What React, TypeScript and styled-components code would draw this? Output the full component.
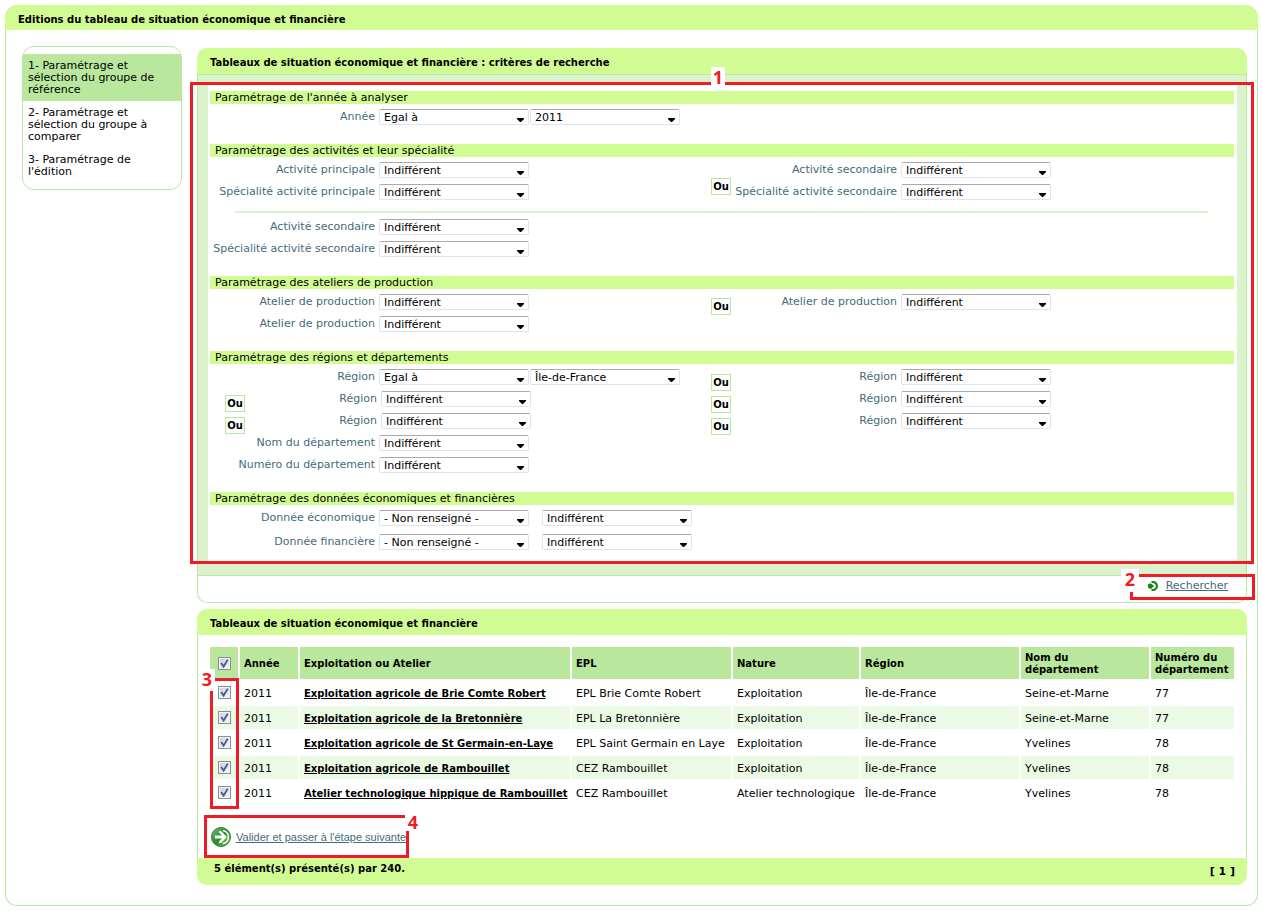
import React, { useId } from "react";
import styled, { createGlobalStyle } from "styled-components";

const lime = "#d1fc93";
const leaf = "#b9e79d";
const mist = "#daf3cc";
const stripe = "#eafae4";
const red = "#ee1c24";
const slate = "#446a7c";

const GlobalStyle = createGlobalStyle`
  *, *::before, *::after { box-sizing: border-box; }
  body {
    margin: 0;
    background: #fff;
    color: #000;
    font: 11px/12px "DejaVu Sans", Verdana, sans-serif;
  }
  h1, h2, h3 { margin: 0; }
`;

const Page = styled.div`
  margin: 5px 4px 5px 5px;
`;

const PageTitle = styled.h1`
  padding: 9px 13px 4px;
  background: ${lime};
  border-radius: 12px 12px 0 0;
  font-size: 10px;
`;

const PageBody = styled.div`
  display: flex;
  align-items: flex-start;
  gap: 15px;
  padding: 16px 10px 20px 16px;
  border: 1px solid ${leaf};
  border-top: 0;
  border-radius: 0 0 12px 12px;
`;

const Steps = styled.nav`
  flex: 0 0 160px;
  padding: 7px 0 6px;
  border: 1px solid ${leaf};
  border-radius: 12px;
`;

const Step = styled.a<{ $current?: boolean }>`
  display: block;
  padding: 6px 20px 5px 5px;
  color: #000;
  text-decoration: none;
  background: ${(p) => (p.$current ? leaf : "transparent")};
`;

const Main = styled.main`
  flex: 1;
  min-width: 0;
  display: flex;
  flex-direction: column;
  gap: 6px;
  padding-top: 2px;
`;

const PanelTitle = styled.h2`
  padding: 9px 13px 5px;
  background: ${lime};
  border-radius: 10px 10px 0 0;
  font-size: 10px;
`;

const FormFrame = styled.div`
  position: relative;
  padding: 8px 9px 14px 10px;
  background: ${mist};
  border: 1px solid ${leaf};
`;

const Sheet = styled.form`
  display: flex;
  flex-direction: column;
  gap: 19px;
  padding: 8px 3px 11px 2px;
  background: #fff;
`;

const FormFoot = styled.div`
  position: relative;
  display: flex;
  justify-content: flex-end;
  align-items: center;
  height: 27px;
  padding: 0 18px 6px;
  border: 1px solid ${leaf};
  border-top: 0;
  border-radius: 0 0 10px 10px;
`;

const SectionTitle = styled.h3`
  margin-bottom: 5px;
  padding: 1px 5px 0;
  font-size: 11px;
  font-weight: normal;
  background: ${lime};
`;

const Columns = styled.div`
  display: grid;
  grid-template-columns: 501fr 21px 502fr;
`;

const Stack = styled.div<{ $gap?: number; $top?: number }>`
  display: flex;
  flex-direction: column;
  gap: ${(p) => p.$gap ?? 6}px;
  padding-top: ${(p) => p.$top ?? 0}px;
`;

const Divider = styled.hr`
  height: 2px;
  margin: 11px 26px 6px 25px;
  border: 0;
  background: ${mist};
`;

const Row = styled.div<{ $shift?: boolean }>`
  display: flex;
  height: 16px;
  padding-left: ${(p) => (p.$shift ? 2 : 0)}px;
`;

const LabelCell = styled.div<{ $split?: boolean }>`
  flex: 0 0 169px;
  display: flex;
  justify-content: ${(p) => (p.$split ? "space-between" : "flex-end")};
  padding: 0 4px 0 ${(p) => (p.$split ? 13 : 0)}px;
`;

const Label = styled.label`
  padding-top: 2px;
  color: ${slate};
  white-space: nowrap;
`;

const Or = styled.b`
  width: 20px;
  height: 17px;
  border: 1px solid ${leaf};
  background: #fff;
  font-size: 10px;
  line-height: 16px;
  text-align: center;
`;

const RowOr = styled(Or)`
  margin-top: 4px;
`;

const SelectBox = styled.span<{ $before: number }>`
  display: grid;
  align-items: center;
  width: 150px;
  height: 16px;
  margin-left: ${(p) => p.$before}px;

  > * { grid-area: 1 / 1; }
  > svg {
    justify-self: end;
    margin: 6px 5px 0 0;
    pointer-events: none;
  }
`;

const Select = styled.select`
  appearance: none;
  width: 100%;
  height: 16px;
  padding: 1px 18px 0 4px;
  border: 1px solid #dfe3ec;
  border-top-color: #a9a9ae;
  border-radius: 2px;
  background: #fff;
  color: #000;
  font: 11px/13px "DejaVu Sans", Verdana, sans-serif;
`;

const TextLink = styled.a`
  display: inline-flex;
  align-items: center;
  gap: 8px;
  color: ${slate};
`;

const NextLink = styled(TextLink)`
  gap: 5px;
  font: 11px/14px "Liberation Sans", Arial, sans-serif;
`;

const ResultBody = styled.div`
  padding: 10px 10px 8px;
  border: solid ${leaf};
  border-width: 0 1px;
`;

const Results = styled.table`
  width: 100%;
  table-layout: fixed;
  border-spacing: 2px;

  th, td {
    height: 23px;
    padding: 0 4px;
    text-align: left;
    white-space: nowrap;
  }
  th {
    height: 32px;
    padding-top: 1px;
    background: ${leaf};
    font-size: 10px;
    white-space: normal;
  }
  td { padding-top: 2px; }
  th:first-child, td:first-child { padding: 0; text-align: center; }
  tbody tr:nth-child(even) td { background: ${stripe}; }
  td a { color: #000; font-size: 10px; font-weight: bold; }
`;

const CheckFrame = styled.span`
  display: inline-grid;
  vertical-align: middle;

  > * { grid-area: 1 / 1; }
  > svg { display: none; pointer-events: none; }
  > input:checked + svg { display: block; }
`;

const CheckInput = styled.input`
  appearance: none;
  width: 13px;
  height: 13px;
  margin: 0;
  border: 1px solid #8e8f8f;
  background: linear-gradient(135deg, #c9ced6, #f7f8f9);
  box-shadow: inset 0 0 0 1px #f4f4f4;
`;

const NextBar = styled.div`
  position: relative;
  display: inline-block;
  margin-top: 9px;
  padding: 12px 3px 0 3px;
`;

const ResultFoot = styled.div`
  display: flex;
  justify-content: space-between;
  padding: 5px 12px 7px 17px;
  background: ${lime};
  border-radius: 0 0 10px 10px;
  font-size: 10px;
  font-weight: bold;
`;

const PageCount = styled.span`
  padding-top: 3px;
  font-size: 11px;
`;

/* Red call-outs laid over the screen */
const Callout = styled.div`
  position: absolute;
  border: 3px solid ${red};
  pointer-events: none;
`;
const CalloutForm = styled(Callout)`
  inset: 7px -8px 11px -8px;
`;
const CalloutSearch = styled(Callout)`
  inset: -2px -9px 2px auto;
  width: 125px;
`;
const CalloutRows = styled(Callout)`
  inset: 33px auto -3px 2px;
  width: 29px;
`;
const CalloutNext = styled(Callout)`
  inset: 0 auto -8px -4px;
  width: 205px;
`;
const Mark = styled.b<{ $left: string; $top: number; $width?: number; $height?: number }>`
  position: absolute;
  left: ${(p) => p.$left};
  top: ${(p) => p.$top}px;
  width: ${(p) => p.$width ?? 16}px;
  height: ${(p) => p.$height ?? 20}px;
  background: #fff;
  color: ${red};
  font: bold 18px/20px "Open Sans", "Noto Sans", sans-serif;
  text-align: center;
`;

const TableWrap = styled.div`
  position: relative;
`;

type Field = { label: string; values: string[]; or?: boolean; gap?: number };

function Picker({ value, id, name, before = 0 }: { value: string; id?: string; name?: string; before?: number }) {
  return (
    <SelectBox $before={before}>
      <Select id={id} aria-label={name} defaultValue={value}>
        <option>{value}</option>
      </Select>
      <svg width="7" height="4" viewBox="0 0 7 4" aria-hidden="true">
        <path d="M0 0h7v1L4 4H3L0 1z" fill="#000" />
      </svg>
    </SelectBox>
  );
}

function FieldRow({ label, values, or, gap = 1 }: Field) {
  const id = useId();
  return (
    <Row $shift={or}>
      <LabelCell $split={or}>
        {or && <RowOr>Ou</RowOr>}
        <Label htmlFor={id}>{label}</Label>
      </LabelCell>
      {values.map((v, i) => (
        <Picker key={i} value={v} id={i ? undefined : id} name={i ? `${label} : valeur` : undefined} before={i ? gap : 0} />
      ))}
    </Row>
  );
}

function Fields({ items, gap }: { items: Field[]; gap?: number }) {
  return (
    <Stack $gap={gap}>
      {items.map((f, i) => (
        <FieldRow key={i} {...f} />
      ))}
    </Stack>
  );
}

function Pair({ left, right, ors, top }: { left: Field[]; right: Field[]; ors: number; top: number }) {
  return (
    <Columns>
      <Fields items={left} />
      <Stack $gap={5} $top={top}>
        {Array.from({ length: ors }, (_, i) => (
          <Or key={i}>Ou</Or>
        ))}
      </Stack>
      <Fields items={right} />
    </Columns>
  );
}

function Check({ name }: { name: string }) {
  return (
    <CheckFrame>
      <CheckInput type="checkbox" defaultChecked aria-label={name} />
      <svg width="13" height="13" viewBox="0 0 13 13" aria-hidden="true">
        <path d="M3.2 6 5.600 9.500 9.800 2.600" fill="none" stroke="#3c5a9f" strokeWidth="1.800" />
      </svg>
    </CheckFrame>
  );
}

const any = ["Indifférent"];
const columns = [28, 58, 270, 159, 126, 158, 128, 83];
const headings = ["Année", "Exploitation ou Atelier", "EPL", "Nature", "Région", "Nom du département", "Numéro du département"];
const rows = [
  ["2011", "Exploitation agricole de Brie Comte Robert", "EPL Brie Comte Robert", "Exploitation", "Île-de-France", "Seine-et-Marne", "77"],
  ["2011", "Exploitation agricole de la Bretonnière", "EPL La Bretonnière", "Exploitation", "Île-de-France", "Seine-et-Marne", "77"],
  ["2011", "Exploitation agricole de St Germain-en-Laye", "EPL Saint Germain en Laye", "Exploitation", "Île-de-France", "Yvelines", "78"],
  ["2011", "Exploitation agricole de Rambouillet", "CEZ Rambouillet", "Exploitation", "Île-de-France", "Yvelines", "78"],
  ["2011", "Atelier technologique hippique de Rambouillet", "CEZ Rambouillet", "Atelier technologique", "Île-de-France", "Yvelines", "78"],
];

export default function App() {
  return (
    <>
      <GlobalStyle />
      <Page>
        <PageTitle>Editions du tableau de situation économique et financière</PageTitle>
        <PageBody>
          <Steps>
            <Step href="#reference" $current>1- Paramétrage et sélection du groupe de référence</Step>
            <Step href="#comparer">2- Paramétrage et sélection du groupe à comparer</Step>
            <Step href="#edition">3- Paramétrage de l'édition</Step>
          </Steps>
          <Main>
            <section>
              <PanelTitle>Tableaux de situation économique et financière : critères de recherche</PanelTitle>
              <FormFrame>
                <Sheet>
                  <div>
                    <SectionTitle>Paramétrage de l'année à analyser</SectionTitle>
                    <Fields items={[{ label: "Année", values: ["Egal à", "2011"] }]} />
                  </div>
                  <div>
                    <SectionTitle>Paramétrage des activités et leur spécialité</SectionTitle>
                    <Pair
                      left={[{ label: "Activité principale", values: any }, { label: "Spécialité activité principale", values: any }]}
                      right={[{ label: "Activité secondaire", values: any }, { label: "Spécialité activité secondaire", values: any }]}
                      ors={1}
                      top={16}
                    />
                    <Divider />
                    <Fields items={[{ label: "Activité secondaire", values: any }, { label: "Spécialité activité secondaire", values: any }]} />
                  </div>
                  <div>
                    <SectionTitle>Paramétrage des ateliers de production</SectionTitle>
                    <Pair
                      left={[{ label: "Atelier de production", values: any }, { label: "Atelier de production", values: any }]}
                      right={[{ label: "Atelier de production", values: any }]}
                      ors={1}
                      top={4}
                    />
                  </div>
                  <div>
                    <SectionTitle>Paramétrage des régions et départements</SectionTitle>
                    <Pair
                      left={[
                        { label: "Région", values: ["Egal à", "Île-de-France"] },
                        { label: "Région", values: any, or: true },
                        { label: "Région", values: any, or: true },
                        { label: "Nom du département", values: any },
                        { label: "Numéro du département", values: any },
                      ]}
                      right={[
                        { label: "Région", values: any },
                        { label: "Région", values: any },
                        { label: "Région", values: any },
                      ]}
                      ors={3}
                      top={5}
                    />
                  </div>
                  <div>
                    <SectionTitle>Paramétrage des données économiques et financières</SectionTitle>
                    <Fields
                      gap={8}
                      items={[
                        { label: "Donnée économique", values: ["- Non renseigné -", "Indifférent"], gap: 13 },
                        { label: "Donnée financière", values: ["- Non renseigné -", "Indifférent"], gap: 13 },
                      ]}
                    />
                  </div>
                </Sheet>
                <CalloutForm />
                <Mark $left="calc(50% - 11px)" $top={-8} $width={14} $height={19}>1</Mark>
              </FormFrame>
              <FormFoot>
                <TextLink href="#rechercher">
                  <svg width="10" height="10" viewBox="0 0 10 10" aria-hidden="true">
                    <path d="M0 3.500 1.500 2.500 3 2.500 6 5 3 8 1.500 7.500 0 6.500z" fill="#0c8a10" />
                    <path d="M3.500 1H6Q9 2.500 9 5T6 9H3.500" fill="none" stroke="#128a16" strokeWidth="2" />
                  </svg>
                  Rechercher
                </TextLink>
                <CalloutSearch />
                <Mark $left="calc(100% - 125px)" $top={-7} $width={18} $height={23}>2</Mark>
              </FormFoot>
            </section>
            <section>
              <PanelTitle>Tableaux de situation économique et financière</PanelTitle>
              <ResultBody>
                <TableWrap>
                  <Results>
                    <colgroup>
                      {columns.map((w, i) => (
                        <col key={i} width={w} />
                      ))}
                    </colgroup>
                    <thead>
                      <tr>
                        <th scope="col"><Check name="Tout sélectionner" /></th>
                        {headings.map((h) => (
                          <th key={h} scope="col">{h}</th>
                        ))}
                      </tr>
                    </thead>
                    <tbody>
                      {rows.map((r) => (
                        <tr key={r[1]}>
                          <td><Check name={r[1]} /></td>
                          {r.map((c, i) => (
                            <td key={i}>{i === 1 ? <a href="#fiche">{c}</a> : c}</td>
                          ))}
                        </tr>
                      ))}
                    </tbody>
                  </Results>
                  <CalloutRows />
                  <Mark $left="-9px" $top={24} $height={22}>3</Mark>
                </TableWrap>
                <NextBar>
                  <NextLink href="#suite">
                    <svg width="20" height="20" viewBox="0 0 20 20" aria-hidden="true">
                      <defs>
                        <linearGradient id="ball" x1="0" y1="0" x2="1" y2="1">
                          <stop offset="0" stopColor="#7fc470" />
                          <stop offset="0.5" stopColor="#2a8a2c" />
                          <stop offset="1" stopColor="#7ed64f" />
                        </linearGradient>
                      </defs>
                      <circle cx="10" cy="10" r="9.5" fill="url(#ball)" stroke="#2f7a35" />
                      <path d="M4 8.500h7L8 5.500V4h2l6 6-6 6H8v-1.500l3-3H4z" fill="#fff" />
                      <path d="M12 3.500Q17.500 5 17.500 10T12 16.500" fill="none" stroke="#fff" strokeWidth="1.500" />
                    </svg>
                    Valider et passer à l'étape suivante
                  </NextLink>
                  <CalloutNext />
                  <Mark $left="197px" $top={-3} $height={19}>4</Mark>
                </NextBar>
              </ResultBody>
              <ResultFoot>
                <span>5 élément(s) présenté(s) par 240.</span>
                <PageCount>[ 1 ]</PageCount>
              </ResultFoot>
            </section>
          </Main>
        </PageBody>
      </Page>
    </>
  );
}
